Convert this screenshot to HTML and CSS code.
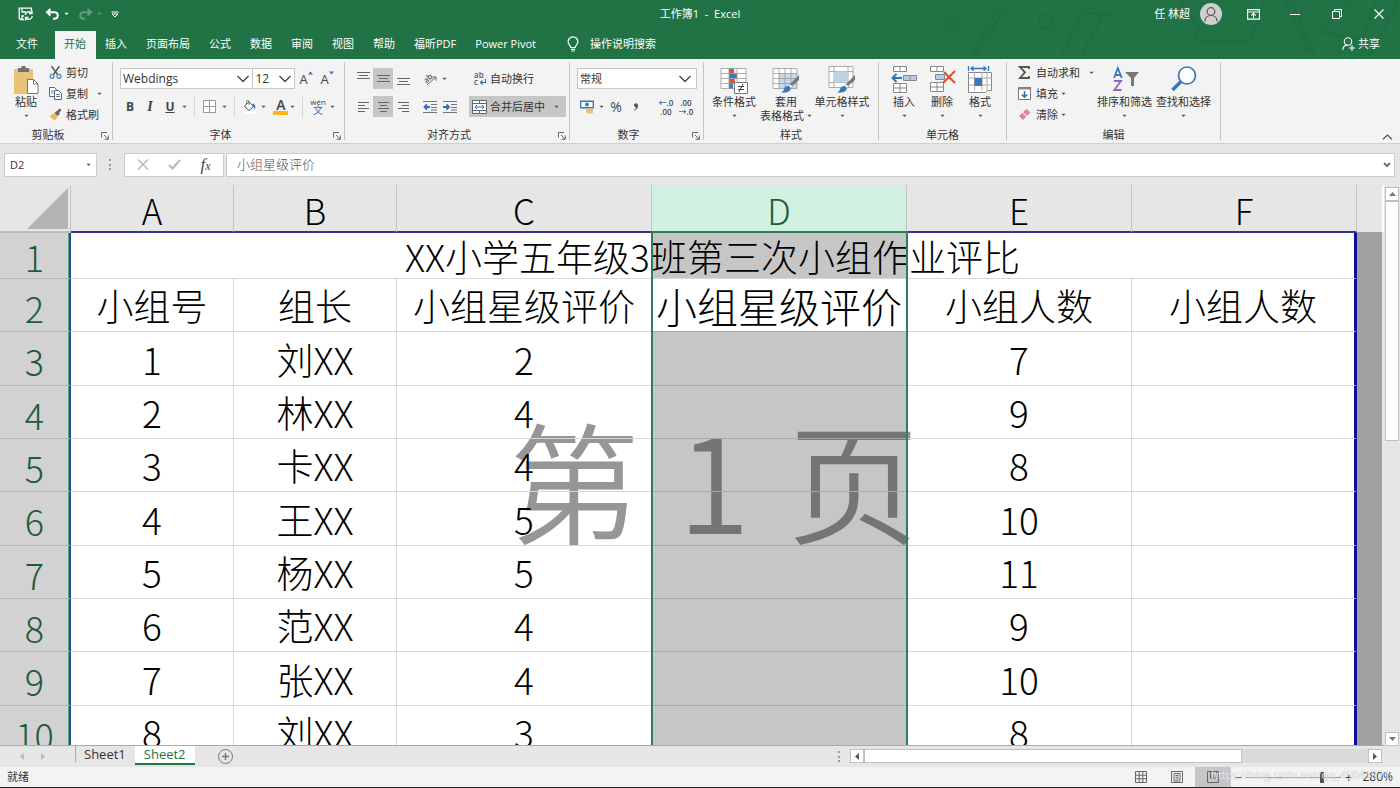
FILE: index.html
```html
<!DOCTYPE html>
<html lang="zh-CN">
<head>
<meta charset="utf-8">
<title>工作簿1 - Excel</title>
<link rel="stylesheet" href="styles.css">
</head>
<body>
<svg class="defs" aria-hidden="true">
  <symbol id="caret" viewBox="0 0 6 4"><path d="M0.5 0.5h5L3 3.3z" fill="currentColor"/></symbol>
  <symbol id="chev" viewBox="0 0 14 8"><path d="M1.5 1l5.5 5.5L12.500 1" fill="none" stroke="#444" stroke-width="1.3"/></symbol>
  <symbol id="launch" viewBox="0 0 8 8"><path d="M.5 5.500V.5H6M3 3l4 4M7.300 3.500v3.800H3.500" fill="none" stroke="#666"/></symbol>
  <symbol id="brush" viewBox="0 0 20 20"><path d="M19 1v5l-7 6-2-2z" fill="#777"/><path d="M10 10l2.500 2.500-1.500 2L8.500 12z" fill="#fff" stroke="#888" stroke-width=".6"/><path d="M8 12c2 .5 3 2 2.500 4-1.500 2-5 3-9.500 2.500 2.500-1 2.500-2.500 3.500-4.500.7-1.200 2-2 3.500-2z" fill="#3a78b8"/></symbol>
</svg>
<div class="app">
  <header class="top">
    <div class="titlebar">
      <div class="quick">
        <button class="icon-btn" aria-label="保存"><svg width="16" height="14" viewBox="0 0 16 14" fill="none" stroke="#fff" stroke-width="1.300"><path d="M6 12.500H2.500L1.200 11V1.200h12.200V4M4 1.500V5h4M4 12V9h2"/><path d="M7.200 8a3.600 3.600 0 0 1 6.300-2M14 3.500V6.500h-3M14.300 9a3.600 3.600 0 0 1-6.300 2.200M7.500 13.500v-3h3"/></svg></button>
        <button class="icon-btn" aria-label="撤消"><svg width="15" height="12" viewBox="0 0 15 12" fill="none" stroke="#fff" stroke-width="2"><path d="M5.500 1L2 4.200l3.500 3.300M2 4.200h7c5 0 5 6.500 0 6.500H8"/></svg><svg class="caret"><use href="#caret"/></svg></button>
        <button class="icon-btn faded" aria-label="恢复"><svg width="15" height="12" viewBox="0 0 15 12" fill="none" stroke="#fff" stroke-width="2"><path d="M9.500 1L13 4.200 9.500 7.500M13 4.200H6c-5 0-5 6.500 0 6.500h1"/></svg><svg class="caret"><use href="#caret"/></svg></button>
        <button class="icon-btn" aria-label="自定义快速访问工具栏"><svg width="8" height="7" viewBox="0 0 8 7" fill="none" stroke="#fff"><path d="M.5 1h7M1 3h6L4 6z"/></svg></button>
      </div>
      <div class="doc-title">工作簿1&nbsp; -&nbsp; Excel</div>
      <div class="win">
        <span>任 林超</span>
        <svg class="avatar" width="22" height="22" viewBox="0 0 22 22"><circle cx="11" cy="11" r="11" fill="#d0d0d0"/><g fill="none" stroke="#555" stroke-width="1.200"><circle cx="11" cy="8.500" r="3.800"/><path d="M4.800 18.500c.5-8 12-8 12.400 0"/></g></svg>
        <button class="win-btn" aria-label="功能区显示选项"><svg width="13" height="11" viewBox="0 0 13 11" fill="none" stroke="#fff" stroke-width="1.100"><path d="M.6.600h11.800v9.500H.6zM.6 3h11.800M6.500 9V4.500M4.300 6.600l2.200-2.200 2.200 2.200"/></svg></button>
        <button class="win-btn" aria-label="最小化"><svg width="10" height="10" viewBox="0 0 10 10" stroke="#fff"><path d="M0 5.500h10"/></svg></button>
        <button class="win-btn" aria-label="还原"><svg width="10" height="10" viewBox="0 0 10 10" fill="none" stroke="#fff"><path d="M.5 2.500h7v7h-7zM2.500 2.500v-2h7v7h-2"/></svg></button>
        <button class="win-btn" aria-label="关闭"><svg width="10" height="10" viewBox="0 0 10 10" stroke="#fff" stroke-width="1.100"><path d="M.5.500l9 9M9.500.500l-9 9"/></svg></button>
      </div>
      <svg class="deco" viewBox="0 0 460 59" preserveAspectRatio="xMaxYMid slice" fill="none" stroke="#1b6039" stroke-width="2" aria-hidden="true"><path d="M32 56L60 6M36 56L65 8M122 56l20-44 28 3M142 54l22-40M240 2l20 28-6 12M260 42h50l14-40M345 2l24 50M352 2l22 54M410 4l-28 28 40 8 14-38M430 56L458 2"/><circle cx="11" cy="24" r="5"/><circle cx="106" cy="22" r="7"/></svg>
    </div>
    <nav class="tabs">
      <button class="tab file">文件</button>
      <button class="tab active">开始</button>
      <button class="tab">插入</button>
      <button class="tab">页面布局</button>
      <button class="tab">公式</button>
      <button class="tab">数据</button>
      <button class="tab">审阅</button>
      <button class="tab">视图</button>
      <button class="tab">帮助</button>
      <button class="tab">福昕PDF</button>
      <button class="tab">Power Pivot</button>
      <button class="tab tell"><svg width="12" height="16" viewBox="0 0 12 16" fill="none" stroke="#fff" stroke-width="1.200"><path d="M3.800 11.500c0-2-2.700-3-2.700-5.800a4.900 4.900 0 0 1 9.800 0c0 2.800-2.700 3.800-2.700 5.800zM4 13.300h4M4.500 15h3"/></svg>操作说明搜索</button>
      <button class="tab share"><svg width="13" height="14" viewBox="0 0 13 14" fill="none" stroke="#fff" stroke-width="1.100"><circle cx="6" cy="4.500" r="3.700"/><path d="M.8 13c.2-3 2-4.800 4.500-4.800M10 8v6M7 11h6"/></svg>共享</button>
    </nav>
  </header>

  <section class="ribbon">
    <div class="group g-clip">
      <div class="body">
        <button class="big"><svg width="26" height="28" viewBox="0 0 26 28"><path d="M1 3h19v25H1z" fill="#e8c276"/><path d="M5 2h3.500V0h4v2H16v4H5z" fill="#707070"/><path d="M14.500 13.500h6l4.500 4.500v9.500H14.500z" fill="#fff" stroke="#777"/><path d="M20.500 13.500V18H25" fill="none" stroke="#777"/></svg><span>粘贴</span><svg class="caret"><use href="#caret"/></svg></button>
        <div class="list">
          <button><svg width="13" height="13" viewBox="0 0 13 13" fill="none" stroke="#555" stroke-width="1.400"><path d="M2.500 0l6 8.500M10.500 0l-6 8.500"/><g stroke="#4a80bd" stroke-width="1.200"><circle cx="3" cy="10.300" r="2"/><circle cx="10" cy="10.300" r="2"/></g></svg>剪切</button>
          <button><svg width="13" height="13" viewBox="0 0 13 13" fill="#fff" stroke="#666"><path d="M.5.500h5l2 2v7h-7z"/><path d="M5.500 3.500h4l3 3v6h-7z"/><path d="M2 4h2.500M2 6h2.500M7 7.500h4M7 9.500h4" stroke="#4a80bd"/></svg>复制<svg class="caret far"><use href="#caret"/></svg></button>
          <button><svg width="13" height="13" viewBox="0 0 13 13"><path d="M8 3l2.500-2.500 2 1.500-2.500 3 1 1L8.500 8 5.500 5 7 3.500z" fill="#666"/><path d="M5 5l4 4-3.500 3.500L.5 8z" fill="#e5b765"/></svg>格式刷</button>
        </div>
      </div>
      <div class="label">剪贴板<svg class="launch"><use href="#launch"/></svg></div>
    </div>

    <div class="group g-font">
      <div class="body rows">
        <div class="row">
          <label class="combo font-name"><input value="Webdings" aria-label="字体"><svg class="chev"><use href="#chev"/></svg></label>
          <label class="combo font-size"><input value="12" aria-label="字号"><svg class="chev"><use href="#chev"/></svg></label>
          <button class="glyph sizer" aria-label="增大字号">A<svg width="5" height="4" viewBox="0 0 5 4"><path d="M0 3.500L2.500.500 5 3.500z" fill="#3a78b8"/></svg></button>
          <button class="glyph sizer" aria-label="减小字号">A<svg width="5" height="4" viewBox="0 0 5 4"><path d="M0 .5L2.500 3.500 5 .5z" fill="#3a78b8"/></svg></button>
        </div>
        <div class="row">
          <button class="glyph"><b>B</b></button>
          <button class="glyph serif"><b><i>I</i></b></button>
          <button class="glyph"><b><u>U</u></b></button>
          <svg class="caret"><use href="#caret"/></svg>
          <i class="sep"></i>
          <button class="glyph" aria-label="边框"><svg width="13" height="13" viewBox="0 0 13 13" fill="#fff" stroke="#999"><path d="M.5.500h12v12H.5zM6.500.500v12M.5 6.500h12"/></svg></button>
          <svg class="caret"><use href="#caret"/></svg>
          <i class="sep"></i>
          <button class="glyph" aria-label="填充颜色"><svg width="13" height="14" viewBox="0 0 13 14"><path d="M0 10.500h13V14H0z" fill="#fff"/><path d="M2 5.500l4-3.500 4.500 4.500-4.500 4L2 7z" fill="#fff" stroke="#555"/><path d="M6 5V1.500a1.200 1.200 0 0 0-2.400 0V4" fill="none" stroke="#555" stroke-width=".8"/><path d="M9.500 3.500c3 .5 3.500 3.500 2 6.500 0-2-.5-3-2-3.500z" fill="#3a78b8"/></svg></button>
          <svg class="caret"><use href="#caret"/></svg>
          <button class="glyph fontcolor" aria-label="字体颜色">A</button>
          <svg class="caret"><use href="#caret"/></svg>
          <i class="sep"></i>
          <button class="glyph pinyin"><small>wén</small><span>文</span></button>
          <svg class="caret"><use href="#caret"/></svg>
        </div>
      </div>
      <div class="label">字体<svg class="launch"><use href="#launch"/></svg></div>
    </div>

    <div class="group g-align">
      <div class="body cols">
        <div class="aligns">
          <button aria-label="顶端对齐"><svg width="13" height="15" viewBox="0 0 13 15" stroke="#666"><path d="M0 1.500h13M2 4.500h9M0 7.500h13"/></svg></button>
          <button class="on" aria-label="垂直居中"><svg width="13" height="15" viewBox="0 0 13 15" stroke="#666"><path d="M0 4.500h13M2 7.500h9M0 10.500h13"/></svg></button>
          <button aria-label="底端对齐"><svg width="13" height="15" viewBox="0 0 13 15" stroke="#666"><path d="M0 7.500h13M2 10.500h9M0 13.500h13"/></svg></button>
          <button aria-label="左对齐"><svg width="11" height="10" viewBox="0 0 11 10" stroke="#666"><path d="M0 .5h11M0 3.500h7M0 6.500h11M0 9.500h7"/></svg></button>
          <button class="on" aria-label="居中"><svg width="11" height="10" viewBox="0 0 11 10" stroke="#666"><path d="M0 .5h11M2 3.500h7M0 6.500h11M2 9.500h7"/></svg></button>
          <button aria-label="右对齐"><svg width="11" height="10" viewBox="0 0 11 10" stroke="#666"><path d="M0 .5h11M4 3.500h7M0 6.500h11M4 9.500h7"/></svg></button>
        </div>
        <div class="indent">
          <div class="row"><button class="glyph" aria-label="方向"><svg width="15" height="14" viewBox="0 0 15 14"><text x="0" y="9" class="ab" transform="rotate(-45 5 6)">ab</text><path d="M4 13l9-8M9.500 5H13v3.500" fill="none" stroke="#666"/></svg></button><svg class="caret"><use href="#caret"/></svg></div>
          <div class="row">
            <button class="glyph" aria-label="减少缩进量"><svg width="14" height="12" viewBox="0 0 14 12"><path d="M0 .5h14M8 3.500h6M8 6.500h6M8 9h6M0 11.500h14" stroke="#777"/><path d="M7 6H1.500M4 3.500L1.500 6 4 8.500" fill="none" stroke="#2f73b8" stroke-width="1.800"/></svg></button>
            <button class="glyph" aria-label="增加缩进量"><svg width="14" height="12" viewBox="0 0 14 12"><path d="M0 .5h14M8 3.500h6M8 6.500h6M8 9h6M0 11.500h14" stroke="#777"/><path d="M0 6h6M3.500 3.500L6 6 3.500 8.500" fill="none" stroke="#2f73b8" stroke-width="1.800"/></svg></button>
          </div>
        </div>
        <div class="wraps">
          <button><svg width="13" height="14" viewBox="0 0 13 14"><text x="0" y="6" class="ab">ab</text><text x="0" y="13" class="ab">c</text><path d="M11.500 7v3.500H6.500M8.500 8.500l-2 2 2 2" fill="none" stroke="#2f73b8" stroke-width="1.200"/></svg>自动换行</button>
          <button class="on"><svg width="15" height="14" viewBox="0 0 15 14" fill="#fff" stroke="#666"><path d="M.5.500h14v13H.5zM.5 3.500h14M.5 10.500h14M7.500.500v3M7.500 10.500v3"/><path d="M3 7h9M5 5L3 7l2 2M10 5l2 2-2 2" fill="none" stroke="#2f73b8"/></svg>合并后居中<svg class="caret"><use href="#caret"/></svg></button>
        </div>
      </div>
      <div class="label">对齐方式<svg class="launch"><use href="#launch"/></svg></div>
    </div>

    <div class="group g-num">
      <div class="body rows">
        <label class="combo"><input value="常规" aria-label="数字格式"><svg class="chev"><use href="#chev"/></svg></label>
        <div class="row">
          <button class="glyph" aria-label="会计数字格式"><svg width="14" height="14" viewBox="0 0 14 14"><path d="M.7 1.200h12.600v6.600H.7z" fill="#fff" stroke="#3a78b8" stroke-width="1.400"/><circle cx="7" cy="4.500" r="1.900" fill="#3a78b8"/><path d="M6 9.500c0-1.500 7-1.500 7 0v3c0 1.500-5 1.500-7 0z" fill="#e8c276"/></svg></button>
          <svg class="caret"><use href="#caret"/></svg>
          <button class="glyph pct">%</button>
          <button class="glyph comma" aria-label="千位分隔样式"><svg width="6" height="8" viewBox="0 0 6 8"><circle cx="3" cy="2.300" r="2" fill="#555"/><path d="M5 2c.3 2.500-1 4.500-3.500 5.500L1 7c1.500-.8 2.300-2 2-3.500z" fill="#555"/></svg></button>
          <i class="sep"></i>
          <button class="glyph dec"><span><em>←</em>.0</span><span>.00</span></button>
          <button class="glyph dec"><span>.00</span><span><em>→</em>.0</span></button>
        </div>
      </div>
      <div class="label">数字<svg class="launch"><use href="#launch"/></svg></div>
    </div>

    <div class="group g-style">
      <div class="body">
        <button class="big"><svg width="28" height="28" viewBox="0 0 28 28"><path d="M1 2.500h25v20H1z" fill="#fff"/><path d="M9 2.500h5v5H9zM9 13h6v5H9z" fill="#d8552f"/><path d="M9 7.500h8v5H9zM9 18h4v5H9z" fill="#3a78b8"/><path d="M1 2.500h25v20H1zM1 7.500h25M1 12.500h25M1 17.500h25M9 2.500v20M17 2.500v20" fill="none" stroke="#999" stroke-width=".8"/><path d="M14.500 16.500h13v11h-13z" fill="#fff" stroke="#777"/><path d="M18 20.500h6M18 23.500h6M23 18l-4 8" stroke="#444"/></svg><span>条件格式</span><svg class="caret"><use href="#caret"/></svg></button>
        <button class="big"><svg width="28" height="28" viewBox="0 0 28 28"><path d="M1 2.500h24v20H1z" fill="#fff"/><path d="M7 7.500h18v15H7z" fill="#c5d9ee"/><path d="M1 2.500h24v20H1zM1 7.500h24M1 12.500h24M1 17.500h24M7 2.500v20M13 2.500v20M19 2.500v20" fill="none" stroke="#999" stroke-width=".8"/><use href="#brush" x="8" y="8" width="20" height="20"/></svg><span>套用<br>表格格式<svg class="caret"><use href="#caret"/></svg></span></button>
        <button class="big"><svg width="28" height="28" viewBox="0 0 28 28"><path d="M1 .5h24v21H1z" fill="#fff"/><path d="M1 .5h24v21H1zM1 5.500h24M1 16.500h24M6 .5v21M20 .5v21" fill="none" stroke="#999" stroke-width=".8"/><path d="M6 5.500h14v11H6z" fill="#bdd2e6"/><use href="#brush" x="8" y="8" width="20" height="20"/></svg><span>单元格样式</span><svg class="caret"><use href="#caret"/></svg></button>
      </div>
      <div class="label">样式</div>
    </div>

    <div class="group g-cell">
      <div class="body">
        <button class="big"><svg width="28" height="28" viewBox="0 0 28 28"><g fill="#fff" stroke="#888"><path d="M3.500.500h13v5h-13zM10 .5v5M3.500 17.500h13v9h-13zM10 17.500v9M3.500 22h13"/><path d="M13.500 9.500h13v5h-13zM20 9.500v5" fill="#b5cde6"/></g><path d="M12 12H2.500M6.500 8L2.500 12l4 4" fill="none" stroke="#2f73b8" stroke-width="2"/></svg><span>插入</span><svg class="caret"><use href="#caret"/></svg></button>
        <button class="big"><svg width="28" height="28" viewBox="0 0 28 28"><g fill="#fff" stroke="#888"><path d="M2.500.500h13v5h-13zM9 .5v5M2.500 16.500h13v9h-13zM9 16.500v9M2.500 21h13"/><path d="M7.500 8.500h9v5h-9z" fill="#b5cde6"/></g><path d="M16 6l11 11M27 5L15 17" fill="none" stroke="#d8552f" stroke-width="2.200"/></svg><span>删除</span><svg class="caret"><use href="#caret"/></svg></button>
        <button class="big"><svg width="28" height="28" viewBox="0 0 28 28"><path d="M2.500 6.500h23v18h-4l-2 2h-17z" fill="#fff" stroke="#888"/><path d="M8.500 6.500v18M16 6.500v18M21 6.500v18M2.500 12h23M2.500 19h23" stroke="#aaa"/><path d="M8.500 12H16v8H8.500z" fill="#3a78b8"/><path d="M2.500 0v5M22.500 0v5M5 2.500h15M7.500.500l-2.500 2 2.500 2M17.500.500l2.500 2-2.500 2" fill="none" stroke="#2f73b8" stroke-width="1.300"/></svg><span>格式</span><svg class="caret"><use href="#caret"/></svg></button>
      </div>
      <div class="label">单元格</div>
    </div>

    <div class="group g-edit">
      <div class="body">
        <div class="list">
          <button><svg width="13" height="13" viewBox="0 0 13 13" fill="none" stroke="#555" stroke-width="1.800"><path d="M11 3V1H2l5 5.300L2 12h9v-2"/></svg>自动求和<svg class="caret far"><use href="#caret"/></svg></button>
          <button><svg width="13" height="13" viewBox="0 0 13 13"><path d="M.5.500h12v12H.5z" fill="#fff" stroke="#777"/><path d="M.5.500h12v2H.5z" fill="#888"/><path d="M6.500 4v6M3.800 7.500l2.700 2.700 2.700-2.700" fill="none" stroke="#2f73b8" stroke-width="1.600"/></svg>填充<svg class="caret"><use href="#caret"/></svg></button>
          <button><svg width="13" height="13" viewBox="0 0 13 13"><path d="M8.500 1L12.500 4.500 9 8 5 4z" fill="#e5839c"/><path d="M4.300 4.800l4 4L5 12 1 8.200z" fill="#e5839c"/></svg>清除<svg class="caret"><use href="#caret"/></svg></button>
        </div>
        <button class="big"><svg width="28" height="28" viewBox="0 0 28 28"><g fill="none" stroke-width="1.800"><path d="M3 12L6.800 2l4 10M4.300 9h5" stroke="#3a78b8"/><path d="M3 15h7L3.300 24h7.200" stroke="#9a5fc0"/></g><path d="M14 6h14l-5 6v8h-3v-8z" fill="#777"/></svg><span>排序和筛选</span><svg class="caret"><use href="#caret"/></svg></button>
        <button class="big"><svg width="28" height="28" viewBox="0 0 28 28"><circle cx="17" cy="9.500" r="8.500" fill="#fff" stroke="#3a78b8" stroke-width="1.700"/><path d="M11 15.500L2.500 24" stroke="#3a78b8" stroke-width="3.500"/></svg><span>查找和选择</span><svg class="caret"><use href="#caret"/></svg></button>
      </div>
      <div class="label">编辑</div>
    </div>
    <button class="collapse" aria-label="折叠功能区"><svg width="11" height="6" viewBox="0 0 11 6" fill="none" stroke="#555" stroke-width="1.200"><path d="M1 5.300L5.500 1 10 5.300"/></svg></button>
  </section>

  <section class="formula">
    <label class="namebox"><input value="D2" aria-label="名称框"><svg class="caret"><use href="#caret"/></svg></label>
    <i class="grip"></i>
    <div class="fx">
      <button aria-label="取消"><svg width="12" height="11" viewBox="0 0 12 11" stroke="#b8b8b8" stroke-width="1.500"><path d="M1 .5l10 10M11 .5l-10 10"/></svg></button>
      <button aria-label="输入"><svg width="13" height="11" viewBox="0 0 13 11" fill="none" stroke="#b8b8b8" stroke-width="2"><path d="M1 6l3.500 3.500L12 1"/></svg></button>
      <button class="fn"><i>f<small>x</small></i></button>
    </div>
    <label class="content"><input value="小组星级评价" aria-label="编辑栏"><svg width="8" height="6" viewBox="0 0 8 6" fill="none" stroke="#555" stroke-width="1.700"><path d="M1 1l3 3 3-3"/></svg></label>
  </section>

  <main class="work">
    <div class="sheet">
      <div class="page-mark"><span>第</span><span>1</span><span>页</span></div>
      <table>
        <colgroup><col class="c-h"><col class="c-a"><col class="c-b"><col class="c-c"><col class="c-d"><col class="c-e"><col class="c-f"></colgroup>
        <thead><tr><th class="corner"><svg width="41" height="41" viewBox="0 0 41 41"><path d="M41 0v41H0z" fill="#b4b4b4"/></svg></th><th>A</th><th>B</th><th>C</th><th class="sel">D</th><th>E</th><th>F</th></tr></thead>
        <tbody>
          <tr class="r1"><th>1</th><td colspan="6">XX小学五年级3班第三次小组作业评比</td></tr>
          <tr><th>2</th><td>小组号</td><td>组长</td><td>小组星级评价</td><td class="cur">小组星级评价</td><td>小组人数</td><td>小组人数</td></tr>
          <tr><th>3</th><td>1</td><td>刘XX</td><td>2</td><td></td><td>7</td><td></td></tr>
          <tr><th>4</th><td>2</td><td>林XX</td><td>4</td><td></td><td>9</td><td></td></tr>
          <tr><th>5</th><td>3</td><td>卡XX</td><td>4</td><td></td><td>8</td><td></td></tr>
          <tr><th>6</th><td>4</td><td>王XX</td><td>5</td><td></td><td>10</td><td></td></tr>
          <tr><th>7</th><td>5</td><td>杨XX</td><td>5</td><td></td><td>11</td><td></td></tr>
          <tr><th>8</th><td>6</td><td>范XX</td><td>4</td><td></td><td>9</td><td></td></tr>
          <tr><th>9</th><td>7</td><td>张XX</td><td>4</td><td></td><td>10</td><td></td></tr>
          <tr><th>10</th><td>8</td><td>刘XX</td><td>3</td><td></td><td>8</td><td></td></tr>
        </tbody>
      </table>
      <div class="outside"></div>
      <div class="selection"></div>
    </div>
    <div class="vscroll">
      <button aria-label="向上滚动"><svg width="7" height="4" viewBox="0 0 7 4"><path d="M0 4L3.500 0 7 4z" fill="#777"/></svg></button>
      <i class="thumb"></i>
      <button class="end" aria-label="向下滚动"><svg width="7" height="4" viewBox="0 0 7 4"><path d="M0 0l3.500 4L7 0z" fill="#777"/></svg></button>
    </div>
  </main>

  <div class="sheetbar">
    <div class="nav"><svg width="4" height="7" viewBox="0 0 4 7"><path d="M4 0v7L0 3.500z" fill="#bbb"/></svg><svg width="4" height="7" viewBox="0 0 4 7"><path d="M0 0v7l4-3.500z" fill="#bbb"/></svg></div>
    <button class="stab">Sheet1</button>
    <button class="stab active">Sheet2</button>
    <button class="add" aria-label="新工作表"><svg width="15" height="15" viewBox="0 0 15 15" fill="none" stroke="#777"><circle cx="7.500" cy="7.500" r="7"/><path d="M7.500 4v7M4 7.500h7" stroke-width="1.400"/></svg></button>
    <i class="grip"></i>
    <div class="hscroll">
      <button aria-label="向左滚动"><svg width="4" height="7" viewBox="0 0 4 7"><path d="M4 0v7L0 3.500z" fill="#555"/></svg></button>
      <i class="thumb"></i>
      <button class="end" aria-label="向右滚动"><svg width="4" height="7" viewBox="0 0 4 7"><path d="M0 0v7l4-3.500z" fill="#555"/></svg></button>
    </div>
  </div>

  <footer class="status">
    <span>就绪</span>
    <div class="views">
      <button aria-label="普通"><svg width="12" height="12" viewBox="0 0 12 12" fill="none" stroke="#666"><path d="M.5.500h11v11H.5zM4.200.500v11M7.800.500v11M.5 4.200h11M.5 7.800h11"/></svg></button>
      <button aria-label="页面布局"><svg width="12" height="12" viewBox="0 0 12 12" fill="none" stroke="#666"><path d="M.5.500h11v11H.5zM3 2.500h6v7.500H3zM4.500 4.500h3M4.500 6.200h3M4.500 8h3"/></svg></button>
      <button class="on" aria-label="分页预览"><svg width="12" height="12" viewBox="0 0 12 12" fill="none" stroke="#666"><path d="M.5.500h11v11H.5zM3.500.500V7h6V.5M6.500.500V7"/></svg></button>
    </div>
    <div class="zoom"><span>−</span><i class="track"><i class="knob"></i></i><span>+</span></div>
    <span class="pct-val">280%</span>
    <span class="credit">https://blog.csdn.net/qq_45041871</span>
  </footer>
</div>
</body>
</html>
```

FILE: styles.css
```css
* { box-sizing: border-box; }
body {
  margin: 0;
  font: 11px/16px "Open Sans", "Noto Sans CJK SC", sans-serif;
  color: #333;
}
button, input {
  font: inherit;
  color: inherit;
  border: 0;
  margin: 0;
  padding: 0;
  background: none;
}
button { display: flex; align-items: center; white-space: nowrap; }
input { width: 100%; min-width: 0; outline: 0; }
svg { flex: none; display: block; }
.defs { position: absolute; width: 0; height: 0; }
.caret { width: 5px; height: 4px; color: #555; }
.chev { width: 14px; height: 8px; }
.app { height: 100vh; display: flex; flex-direction: column; background: #e6e6e6; overflow: hidden; border-bottom: 1px solid #222; }

/* Title bar and tabs */
.top { background: #217346; color: #fff; position: relative; flex: none; }
.titlebar { display: grid; grid-template-columns: 1fr auto 1fr; align-items: center; height: 28px; }
.quick { display: flex; gap: 9px; padding-left: 18px; }
.icon-btn { gap: 4px; }
.icon-btn .caret { color: #fff; }
.quick .icon-btn:nth-child(2) { margin-left: 2px; }
.faded { opacity: .3; }
.win { display: flex; align-items: center; justify-content: flex-end; position: relative; z-index: 1; }
.avatar { margin: 0 10px; }
.win-btn { width: 42px; height: 28px; justify-content: center; }
.deco { position: absolute; right: 0; top: 0; width: 460px; height: 59px; opacity: .3; }
.tabs { display: flex; height: 31px; padding-top: 3px; position: relative; }
.tab { padding: 0 10px 2px 9px; }
.tab.file { padding: 0 17px 2px 16px; }
.tab.active { background: #f3f3f3; color: #217346; }
.tell { gap: 11px; margin-left: 12px; }
.share { margin-left: auto; padding-right: 20px; gap: 3px; }

/* Ribbon */
.ribbon { display: flex; height: 85px; padding: 3px 0; background: #f3f3f3; border-bottom: 1px solid #d0d0d0; flex: none; }
.group { border-right: 1px solid #c4c4c4; display: flex; flex-direction: column; flex: none; }
.g-clip { width: 113px; }
.g-font { width: 232px; }
.g-align { width: 225px; }
.g-num { width: 134px; }
.g-style { width: 175px; }
.g-cell { width: 128px; }
.g-edit { width: 214px; }
.body { flex: 1; display: flex; min-height: 0; }
.label { height: 13px; flex: none; line-height: 16px; text-align: center; position: relative; padding-right: 16px; }
.g-style .label, .g-cell .label, .g-edit .label { padding: 0; }
.launch { position: absolute; right: 3px; bottom: 0; width: 8px; height: 8px; }
.big { flex-direction: column; align-self: flex-start; padding-top: 4px; line-height: 14px; }
.big > span { margin: 1px 0 5px; text-align: center; }
.big span .caret { display: inline-block; margin-left: 3px; vertical-align: 2px; }
.g-clip .big { padding-left: 14px; width: 38px; }
.list { display: flex; flex-direction: column; padding-left: 11px; }
.list button { height: 21px; gap: 4px; }
.list .far { margin-left: 5px; }
.g-edit .list { padding-left: 11px; width: 88px; }
.g-edit .list button { gap: 5px; }
.g-edit .list .caret { margin-left: -2px; }
.g-edit .list .far { margin-left: 4px; }
.g-style .big { width: 54px; }
.g-style .big:nth-child(2) { width: 50px; }
.g-style .big:last-child { width: 62px; }
.g-style .body { padding-left: 3px; }
.g-cell .body { padding-left: 6px; }
.g-cell .big { width: 38px; }
.g-edit .big { width: 59px; }
.rows { flex-direction: column; padding: 6px 7px 0; gap: 7px; }
.row { display: flex; align-items: center; height: 21px; }
.combo { display: flex; align-items: center; height: 21px; padding: 0 4px 0 2px; background: #fff; border: 1px solid #c6c6c6; font-size: 12px; color: #333; }
.font-name { width: 135px; padding-right: 2px; }
.font-size { width: 43px; margin-left: -1px; padding-right: 2px; }
.g-num .combo { width: 120px; font-size: 11px; }
.glyph { height: 21px; min-width: 20px; justify-content: center; font-size: 12px; color: #444; }
.sizer { font-size: 13px; margin-left: 1px; }
.sizer svg { align-self: flex-start; margin-top: 3px; }
.serif { font-family: "Liberation Serif", serif; font-size: 14px; }
.row .caret { margin: 0 2px; }
.sep { width: 1px; height: 20px; margin: 0 5px; background: #d4d4d4; }
.fontcolor { min-width: 15px; height: 17px; margin-left: 5px; line-height: 13px; border-bottom: 4px solid #f8b818; font-size: 14px; font-weight: 600; }
.pinyin { flex-direction: column; line-height: 9px; font-size: 10px; }
.pinyin small { font-size: 8px; line-height: 8px; }
.pinyin span { color: #2f73b8; }
.aligns { display: grid; grid-template-columns: repeat(3, 20px); grid-auto-rows: 21px; row-gap: 7px; padding: 6px 4px 0 8px; }
.aligns button { justify-content: center; }
.on { background: #c6c6c6; }
.indent { display: flex; flex-direction: column; gap: 7px; padding: 6px 0 0 3px; width: 50px; }
.ab { font: 600 8px "Open Sans", sans-serif; fill: #555; }
.wraps { display: flex; flex-direction: column; gap: 7px; padding: 6px 0 0 2px; }
.wraps button { height: 21px; gap: 3px; padding: 0 7px 0 3px; }
.wraps button:first-child { padding-left: 5px; }
.wraps .caret { margin-left: 6px; }
.pct { font-size: 14px; }
.dec { flex-direction: column; font-size: 8px; line-height: 9px; font-weight: 600; }
.dec em { font-style: normal; color: #2f73b8; }
.collapse { margin-left: auto; align-self: flex-end; padding: 0 7px 0 0; }

/* Formula bar */
.formula { display: flex; align-items: center; height: 41px; padding: 0 5px 0 4px; flex: none; }
.formula label, .fx { display: flex; align-items: center; height: 24px; background: #fff; border: 1px solid #ccc; }
.namebox { width: 93px; padding: 0 5px; }
.grip { width: 2px; height: 11px; border-left: 2px dotted #999; margin: 0 13px 0 12px; }
.fx { width: 100px; justify-content: space-around; padding: 0 3px; }
.fn { font: 17px "Liberation Serif", serif; color: #444; }
.fn small { font-size: 12px; }
.content { flex: 1; margin-left: 2px; padding: 0 3px 0 10px; font-size: 13px; color: #555; }
.content input { font-family: "Liberation Serif", "Noto Sans CJK SC", serif; font-weight: 300; }

/* Worksheet */
.work { flex: 1; display: flex; min-height: 0; }
.sheet { flex: 1; display: flex; position: relative; overflow: hidden; background: #fff; border-bottom: 1px solid #aaa; }
.sheet table { border-collapse: separate; border-spacing: 0; table-layout: fixed; width: 1357px; flex: none; align-self: flex-start; position: relative; font-family: "Noto Sans CJK SC", sans-serif; font-weight: 300; color: #000; }
.c-h { width: 71px; }
.c-a, .c-b { width: 163px; }
.c-c, .c-d { width: 255px; }
.c-e, .c-f { width: 225px; }
.sheet tr { height: 53px; }
.sheet tbody tr:nth-child(3n) { height: 54px; }
.sheet tbody .r1 { height: 46px; }
.sheet thead tr { height: 48px; }
.sheet th, .sheet td { padding: 0; text-align: center; line-height: 40px; white-space: nowrap; }
.sheet td { font-size: 37px; border-right: 1px solid #d8d8d8; border-bottom: 1px solid #d8d8d8; }
.sheet td:last-child { border-right: 3px solid #0c0c9a; }
.sheet td.cur { font-size: 41px; background: #fff; }
.sheet thead th { font-size: 35px; font-weight: 300; padding-top: 3px; background: #e6e6e6; border-right: 1px solid #c2c2c2; border-bottom: 2px solid #34348c; }
.sheet thead .corner { padding: 0; border-bottom-color: #bbb; }
.corner svg { margin: 0 2px 0 auto; }
.sheet thead .sel { background: #d2f0e0; color: #1c5c39; border-bottom-color: #217346; }
.sheet tbody th { font-size: 36px; font-weight: 300; padding-top: 3px; color: #1c5c39; background: #d2d2d2; border-bottom: 1px solid #b8b8b8; border-right: 2px solid #2c4a8c; box-shadow: inset -1px 0 #4fae80; }
.sheet tbody .r1 th { padding: 0; }
.page-mark { position: absolute; left: 509px; top: 202px; display: flex; gap: 38px; font: 350 131px/180px "Noto Sans CJK SC", sans-serif; color: #969696; }
.outside { flex: 1; margin-top: 47px; margin-right: 2px; background: #a0a0a0; box-shadow: 0 -47px #e6e6e6, 2px 0 #e6e6e6; }
.selection { position: absolute; left: 651px; top: 46px; bottom: 0; width: 257px; border: 2px solid #2b8054; border-bottom: 0; background: linear-gradient(rgba(0,0,0,.225) 45px, transparent 45px 98px, rgba(0,0,0,.225) 98px); }

.vscroll { width: 16px; display: flex; flex-direction: column; padding: 2px 1px 0 1px; background: #e6e6e6; }
.vscroll button, .hscroll button { background: #fff; border: 1px solid #c0c0c0; justify-content: center; flex: none; }
.vscroll button { height: 14px; }
.thumb { background: #fff; border: 1px solid #c0c0c0; }
.vscroll .thumb { height: 43%; }
.end { margin-top: auto; }

/* Sheet tabs */
.sheetbar { display: flex; height: 21px; flex: none; align-items: flex-start; }
.nav { display: flex; gap: 17px; padding: 7px 30px 0 20px; }
.stab { font-size: 13px; height: 16px; padding: 0 9px 0 8px; border-left: 1px solid #aaa; }
.stab.active { height: 19px; color: #217346; background: #fff; border-left: 0; border-bottom: 2px solid #217346; padding: 0 9px 2px; }
.add { margin: 3px 0 0 23px; }
.sheetbar .grip { margin: 5px 10px 0 auto; }
.hscroll { display: flex; width: 532px; height: 14px; margin: 3px 18px 0 0; background: #dadada; }
.hscroll button { width: 14px; }
.hscroll .thumb { width: 71%; }
.hscroll .end { margin: 0 0 0 auto; }

/* Status bar */
.status { display: flex; align-items: center; height: 20px; flex: none; background: #f3f3f3; padding: 0 7px; position: relative; }
.views { display: flex; margin-left: auto; height: 20px; }
.views button { width: 36px; justify-content: center; }
.zoom { display: flex; align-items: center; gap: 4px; margin-left: 4px; font-size: 13px; }
.track { width: 95px; height: 1px; background: #999; position: relative; }
.knob { position: absolute; left: 74px; top: -5px; width: 4px; height: 11px; background: #555; }
.pct-val { margin-left: 10px; font-size: 12px; }
.credit { position: absolute; right: 10px; top: 0; color: rgba(255,255,255,.7); text-shadow: 0 0 1px #aaa; }
```
